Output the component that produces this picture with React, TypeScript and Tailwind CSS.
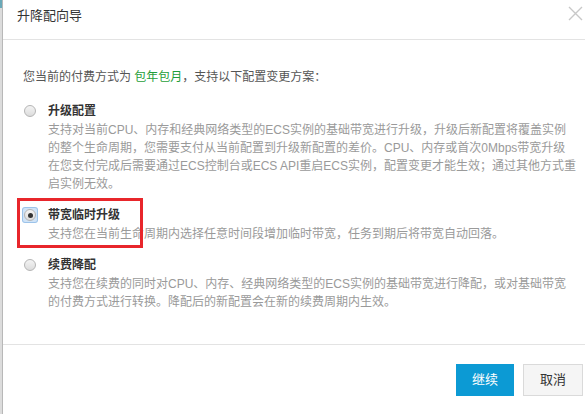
import { useState } from 'react'

const FONT = { fontFamily: '"Liberation Sans", "Noto Sans CJK SC", sans-serif' }

type Option = {
  id: string
  title: string
  lines: string[]
}

const options: Option[] = [
  {
    id: 'upgrade',
    title: '升级配置',
    lines: [
      '支持对当前CPU、内存和经典网络类型的ECS实例的基础带宽进行升级，升级后新配置将覆盖实例',
      '的整个生命周期，您需要支付从当前配置到升级新配置的差价。CPU、内存或首次0Mbps带宽升级',
      '在您支付完成后需要通过ECS控制台或ECS API重启ECS实例，配置变更才能生效；通过其他方式重',
      '启实例无效。',
    ],
  },
  {
    id: 'temp',
    title: '带宽临时升级',
    lines: ['支持您在当前生命周期内选择任意时间段增加临时带宽，任务到期后将带宽自动回落。'],
  },
  {
    id: 'renew',
    title: '续费降配',
    lines: [
      '支持您在续费的同时对CPU、内存、经典网络类型的ECS实例的基础带宽进行降配，或对基础带宽',
      '的付费方式进行转换。降配后的新配置会在新的续费周期内生效。',
    ],
  },
]

function Radio({ checked }: { checked: boolean }) {
  return (
    <span
      className={`flex h-[14px] w-[14px] shrink-0 items-center justify-center ${
        checked ? 'rounded-[2px] bg-[#cfe3f7] ring-1 ring-[#9cc3ea]' : ''
      }`}
    >
      <span className="flex h-[12px] w-[12px] items-center justify-center rounded-full border border-[#b5b5b5] bg-gradient-to-b from-[#f4f4f4] to-[#dcdcdc]">
        {checked && <span className="h-[5px] w-[5px] rounded-full bg-[#333]" />}
      </span>
    </span>
  )
}

export default function App() {
  const [selected, setSelected] = useState('temp')

  return (
    <div className="flex h-[414px] w-[585px] overflow-hidden bg-white text-[12px]" style={FONT}>
      {/* page behind the dialog */}
      <div className="flex w-[2px] flex-col bg-[#dcdcdc]">
        <div className="h-[8px] bg-[#6aa9b8]" />
      </div>
      <div className="w-px bg-[#b8b8b8]" />

      <div className="flex flex-1 flex-col">
        {/* Header */}
        <div className="flex h-[40px] items-start justify-between border-b border-[#e3e3e3] pl-[14px] pr-[2px]">
          <h1 className="pt-[7px] text-[13px] leading-[18px] text-[#333]">升降配向导</h1>
          <svg width="15" height="15" viewBox="0 0 15 15" className="mt-[6px]">
            <path d="M1 1L14 14M14 1L1 14" stroke="#c8c8c8" strokeWidth="1.4" />
          </svg>
        </div>

        {/* Body */}
        <div className="flex flex-1 flex-col pl-[20px] pt-[28px]">
          <p className="leading-[18px] text-[#555]">
            您当前的付费方式为 <span className="text-[#1f9e3a]">包年包月</span>，支持以下配置变更方案：
          </p>

          <div className="mt-[16px] flex flex-col gap-[13px]">
            {options.map((o) => (
              <div
                key={o.id}
                className="relative flex cursor-pointer gap-[11px]"
                onClick={() => setSelected(o.id)}
              >
                <div className="pt-[2px]">
                  <Radio checked={selected === o.id} />
                </div>
                <div className="flex flex-col">
                  <div className="mb-px font-bold leading-[18px] text-[#333]">{o.title}</div>
                  {o.lines.map((l) => (
                    <div key={l} className="whitespace-nowrap leading-[18px] text-[#9a9a9a]">
                      {l}
                    </div>
                  ))}
                </div>
                {o.id === 'temp' && (
                  <div className="pointer-events-none absolute left-[-6px] top-[-8px] h-[50px] w-[126px] border-[3px] border-[#e8262b]" />
                )}
              </div>
            ))}
          </div>
        </div>

        {/* Footer */}
        <div className="flex h-[70px] items-start justify-end gap-[9px] border-t border-[#e3e3e3] pr-[2px] pt-[19px]">
          <button className="h-[32px] w-[58px] bg-[#0c9ad4] text-[13px] text-white">继续</button>
          <button className="h-[32px] w-[60px] border border-[#dadada] bg-[#f5f5f5] text-[13px] text-[#333]">
            取消
          </button>
        </div>
      </div>
    </div>
  )
}
